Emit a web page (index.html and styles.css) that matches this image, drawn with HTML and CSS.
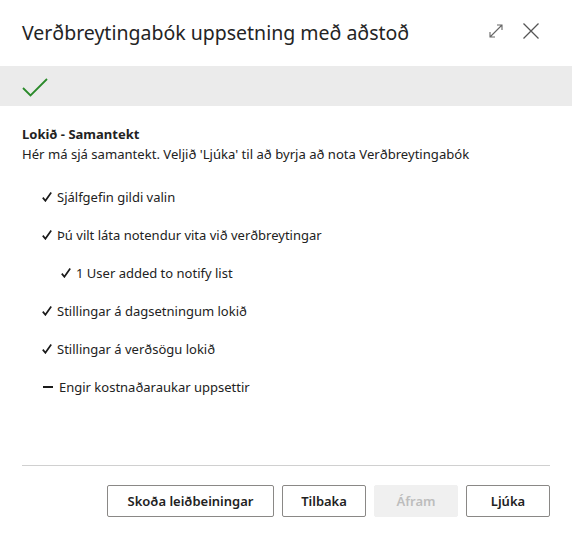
FILE: index.html
```html
<!DOCTYPE html>
<html lang="is">
<head>
<meta charset="utf-8">
<link rel="stylesheet" href="styles.css">
</head>
<body>
<div class="dialog">
  <header class="header">
    <h1 class="title">Verðbreytingabók uppsetning með aðstoð</h1>
    <div class="header-icons">
      <svg class="icon" width="16" height="16" viewBox="0 0 16 16" fill="none" stroke="#666" stroke-width="1.1">
        <path d="M2 14 L14 2 M9 2 H14 V7 M2 9 V14 H7"/>
      </svg>
      <svg class="icon" width="18" height="18" viewBox="0 0 18 18" fill="none" stroke="#555" stroke-width="1.3">
        <path d="M1.5 1.5 L16.5 16.5 M16.5 1.5 L1.5 16.5"/>
      </svg>
    </div>
  </header>
  <div class="band">
    <svg width="26" height="20" viewBox="0 0 26 20" fill="none" stroke="#2a8a2a" stroke-width="1.8">
      <path d="M1 10 L8.5 17.5 L25 1"/>
    </svg>
  </div>
  <section class="content">
    <div class="heading">Lokið - Samantekt</div>
    <div class="desc">Hér má sjá samantekt. Veljið 'Ljúka' til að byrja að nota Verðbreytingabók</div>
    <ul class="list">
      <li class="item"><svg class="mark" width="10" height="10" viewBox="0 0 10 10" fill="none" stroke="#1a1a1a" stroke-width="1.7"><path d="M0.8 5.6 L3.4 8.8 L9.2 0.6"/></svg>Sjálfgefin gildi valin</li>
      <li class="item"><svg class="mark" width="10" height="10" viewBox="0 0 10 10" fill="none" stroke="#1a1a1a" stroke-width="1.7"><path d="M0.8 5.6 L3.4 8.8 L9.2 0.6"/></svg>Þú vilt láta notendur vita við verðbreytingar</li>
      <li class="item sub"><svg class="mark" width="10" height="10" viewBox="0 0 10 10" fill="none" stroke="#1a1a1a" stroke-width="1.7"><path d="M0.8 5.6 L3.4 8.8 L9.2 0.6"/></svg>1 User added to notify list</li>
      <li class="item"><svg class="mark" width="10" height="10" viewBox="0 0 10 10" fill="none" stroke="#1a1a1a" stroke-width="1.7"><path d="M0.8 5.6 L3.4 8.8 L9.2 0.6"/></svg>Stillingar á dagsetningum lokið</li>
      <li class="item"><svg class="mark" width="10" height="10" viewBox="0 0 10 10" fill="none" stroke="#1a1a1a" stroke-width="1.7"><path d="M0.8 5.6 L3.4 8.8 L9.2 0.6"/></svg>Stillingar á verðsögu lokið</li>
      <li class="item"><span class="dash"></span>Engir kostnaðaraukar uppsettir</li>
    </ul>
  </section>
  <footer class="footer">
    <button class="btn wide">Skoða leiðbeiningar</button>
    <button class="btn">Tilbaka</button>
    <button class="btn disabled">Áfram</button>
    <button class="btn">Ljúka</button>
  </footer>
</div>
</body>
</html>
```
FILE: styles.css
```css
html, body {
  margin: 0;
  padding: 0;
  background: #fff;
}
body {
  font-family: "Noto Sans", "Open Sans", sans-serif;
  color: #222;
  width: 572px;
  height: 541px;
  overflow: hidden;
}
.dialog {
  display: flex;
  flex-direction: column;
  height: 541px;
}
.header {
  display: flex;
  align-items: center;
  justify-content: space-between;
  height: 66px;
  padding: 0 32px 0 22px;
}
.title {
  margin: 0;
  font-size: 19.5px;
  font-weight: 400;
  color: #242424;
  padding-bottom: 2px;
}
.header-icons {
  display: flex;
  align-items: center;
  gap: 18px;
  padding-bottom: 4px;
}
.icon { display: block; }
.band {
  background: #ebebeb;
  height: 40px;
  display: flex;
  align-items: center;
  padding-left: 22px;
}
.band svg { margin-top: 3px; }
.content {
  flex: 1;
  border-bottom: 1px solid #d0d0d0;
  margin: 0 22px;
  padding-top: 18px;
}
.heading {
  font-size: 13px;
  font-weight: 700;
  line-height: 20px;
}
.desc {
  font-size: 13.1px;
  line-height: 20px;
}
.list {
  list-style: none;
  margin: 23px 0 0 0;
  padding: 0 0 0 20px;
  display: flex;
  flex-direction: column;
  gap: 18px;
  font-size: 13px;
}
.item {
  display: flex;
  align-items: center;
  line-height: 20px;
}
.item.sub { padding-left: 19px; }
.mark {
  display: block;
  margin-right: 5px;
  flex: none;
}
.dash {
  display: block;
  width: 10px;
  height: 2.5px;
  background: #1a1a1a;
  margin-right: 6px;
  margin-left: 1px;
}
.footer {
  display: flex;
  justify-content: flex-end;
  gap: 8px;
  padding: 19px 22px 24px 0;
}
.btn {
  font-family: "Noto Sans", "Open Sans", sans-serif;
  font-size: 13px;
  font-weight: 600;
  color: #222;
  background: #fff;
  border: 1px solid #8a8886;
  border-radius: 2px;
  height: 32px;
  width: 84px;
  padding: 0;
}
.btn.wide { width: 167px; }
.btn.disabled {
  background: #f0f0f0;
  border-color: #f0f0f0;
  color: #bdbdbd;
}
```
